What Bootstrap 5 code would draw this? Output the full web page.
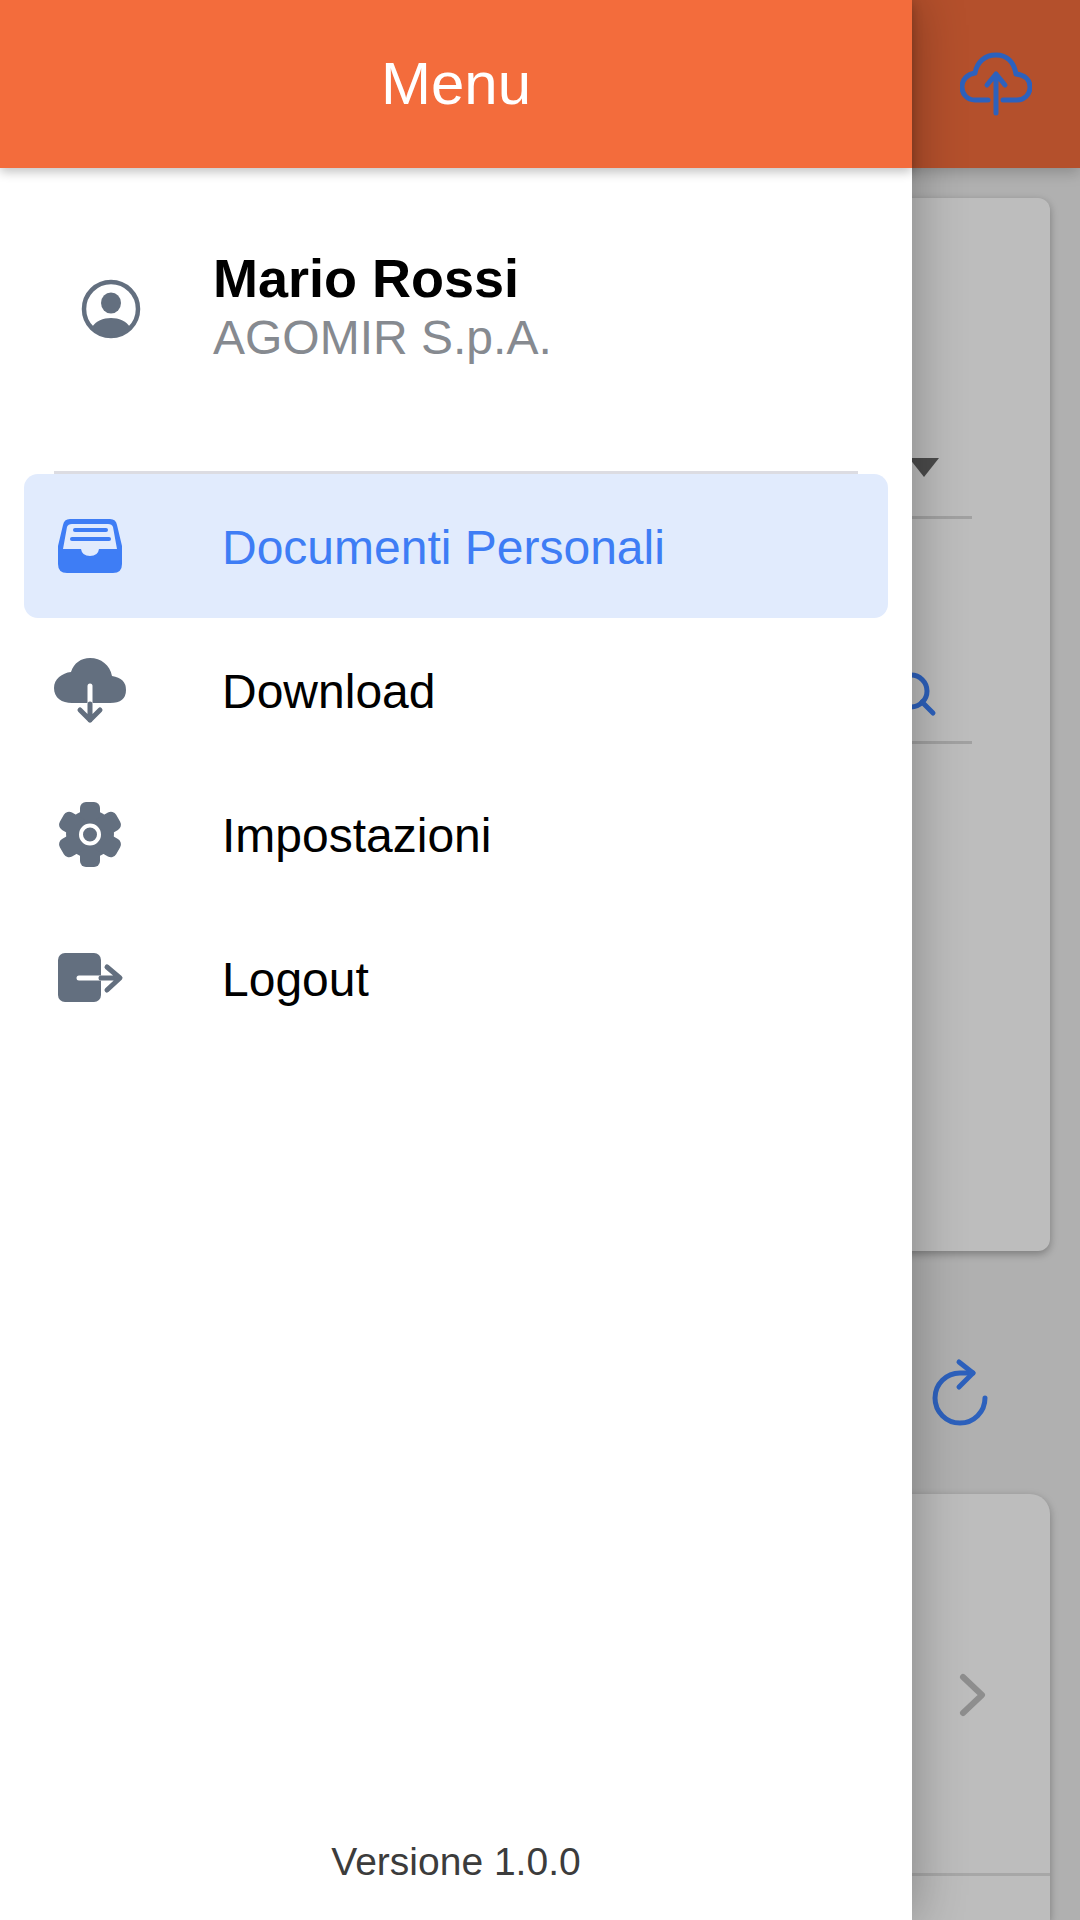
<!DOCTYPE html>
<html lang="it">
<head>
<meta charset="utf-8">
<title>Menu</title>
<link href="https://cdn.jsdelivr.net/npm/bootstrap@5.3.0/dist/css/bootstrap.min.css" rel="stylesheet">
<style>
html, body { margin: 0; width: 1080px; height: 1920px; overflow: hidden; font-family: "Liberation Sans", Arial, sans-serif; }
.stage { width: 1080px; height: 1920px; overflow: hidden; background: #eeeeee; }
.app-head { height: 168px; background: #f36c3c; padding-right: 48px; box-shadow: 0 4px 14px rgba(0,0,0,.22); z-index: 1; }
.app-head svg { width: 72px; height: 72px; }
.stroke-icon { fill: none; stroke: #3d84ff; stroke-width: 5; stroke-linecap: round; stroke-linejoin: round; }
.sheet { margin: 30px 30px 0; height: 1053px; background: #fff; border-radius: 12px; box-shadow: 0 3px 8px rgba(0,0,0,.3); padding: 0 78px 0 0; }
.field { border-bottom: 3px solid #d9d9d9; }
.field-select { height: 321px; padding-top: 260px; padding-right: 33px; }
.field-search { height: 225px; padding-top: 150px; }
.tri { width: 0; height: 0; border-left: 15px solid transparent; border-right: 15px solid transparent; border-top: 19px solid #666; }
.field-search svg { width: 60px; height: 60px; margin-right: 23px; }
.reload-row { height: 243px; padding: 43px 84px 0 0; }
.reload-row svg { width: 72px; height: 72px; }
.sheet-two { margin: 0 30px; height: 426px; flex: 0 0 auto; background: #fff; border-radius: 20px 20px 0 0; box-shadow: 0 3px 8px rgba(0,0,0,.3); }
.sheet-row { height: 382px; padding: 23px 56px 0 0; border-bottom: 3px solid #e2e2e2; }
.sheet-row svg { width: 42px; height: 60px; }
.scrim { inset: 0; background: rgba(0,0,0,.26); z-index: 2; }
.drawer { left: 0; top: 0; width: 912px; height: 1920px; background: #fff; box-shadow: 0 0 50px rgba(0,0,0,.32); z-index: 3; }
.drawer-head { height: 168px; flex: 0 0 168px; background: #f36c3c; color: #fff; font-size: 60px; box-shadow: 0 4px 10px rgba(0,0,0,.24); z-index: 1; }
.who { padding: 81px 0 0 81px; height: 303px; flex: 0 0 303px; align-items: flex-start; }
.who-pic { width: 60px; height: 60px; margin: 30px 72px 0 0; flex: 0 0 60px; }
.who-name { font-size: 54px; font-weight: 700; line-height: 59px; color: #000; }
.who-org { font-size: 48px; line-height: 60px; color: #868a90; }
.rule { height: 3px; background: #dcdce2; margin: 0 54px 0; opacity: 1; border: 0; flex: 0 0 3px; }
.drawer-nav .nav-link { height: 144px; margin: 0 24px; padding: 0 0 0 30px; border-radius: 14px; color: #000; font-size: 48px; display: flex; align-items: center; }
.drawer-nav .nav-link.active { background: #e1ebfd; color: #3e7df5; }
.drawer-nav svg { width: 72px; height: 72px; flex: 0 0 72px; margin-right: 96px; }
.slate { fill: #636f7f; }
.slate-line { fill: none; stroke: #636f7f; stroke-width: 5; stroke-linecap: round; stroke-linejoin: round; }
.white-line { fill: none; stroke: #fff; stroke-width: 5; stroke-linecap: round; }
.version { font-size: 39px; color: #3c3c3c; line-height: 48px; padding-bottom: 34px; }
</style>
</head>
<body>
<div class="stage position-relative">
  <div class="d-flex flex-column h-100">
    <header class="app-head d-flex justify-content-end align-items-center position-relative flex-shrink-0">
      <svg viewBox="0 0 72 72" class="stroke-icon"><path d="M28 52H15C7 52 2 46 2 39C2 31 8 26 15 25C17 14 25 7 36 7C47 7 54 14 56 26C65 27 70 32 70 39C70 47 64 52 57 52H43"/><path d="M36 65V26M27 37L36 26L45 37"/></svg>
    </header>
    <section class="sheet flex-shrink-0">
      <div class="field field-select d-flex justify-content-end"><div class="tri"></div></div>
      <div class="field field-search d-flex justify-content-end align-items-start">
        <svg viewBox="0 0 60 60" class="stroke-icon"><circle cx="22" cy="22" r="16"/><path d="M33 33L44 44"/></svg>
      </div>
    </section>
    <div class="reload-row d-flex justify-content-end align-items-center flex-shrink-0">
      <svg viewBox="0 0 72 72" class="stroke-icon"><path d="M61 40A25 25 0 1 1 36 15H49"/><path d="M35 4L49 15L35 29"/></svg>
    </div>
    <section class="sheet-two">
      <div class="sheet-row d-flex justify-content-end align-items-center">
        <svg viewBox="0 0 42 60" fill="none" stroke="#c0c0c0" stroke-width="6" stroke-linecap="round" stroke-linejoin="round"><path d="M11 12L30 30L11 48"/></svg>
      </div>
    </section>
  </div>

  <div class="scrim position-absolute"></div>

  <aside class="drawer position-absolute d-flex flex-column">
    <div class="drawer-head d-flex align-items-center justify-content-center position-relative">Menu</div>
    <div class="who d-flex">
      <svg class="who-pic" viewBox="0 0 60 60">
        <circle cx="30" cy="30" r="27" fill="none" stroke="#636f7f" stroke-width="4.5"/>
        <ellipse class="slate" cx="30" cy="24" rx="10" ry="10.5"/>
        <path class="slate" d="M11 48C15 42 22 39 30 39C38 39 45 42 49 48C44 54 37 58 30 58C23 58 16 54 11 48Z"/>
      </svg>
      <div>
        <div class="who-name">Mario Rossi</div>
        <div class="who-org">AGOMIR S.p.A.</div>
      </div>
    </div>
    <hr class="rule my-0">
    <nav class="nav nav-pills flex-column drawer-nav">
      <a class="nav-link active" href="#">
        <svg viewBox="0 0 72 72">
          <path fill="#3e7df5" fill-rule="evenodd" d="M16 9H56Q62 9 63 15L68 36V54Q68 63 59 63H13Q4 63 4 54V36L9 15Q10 9 16 9ZM18 14Q14 14 13 17L9 39H27Q28 46 36 46Q44 46 45 39H63L59 17Q58 14 54 14Z"/>
          <rect x="19" y="18" width="35" height="4" rx="2" fill="#3e7df5"/>
          <rect x="16" y="27" width="41" height="4" rx="2" fill="#3e7df5"/>
        </svg>
        <span class="pt-1">Documenti Personali</span>
      </a>
      <a class="nav-link" href="#">
        <svg viewBox="0 0 72 72">
          <path class="slate" d="M18 49H56Q72 49 72 36Q72 24 58 22C56 11 47 4 36 4C27 4 20 9 17 18C8 19 0 25 0 34C0 44 8 49 18 49Z"/>
          <path class="white-line" d="M36 32V49"/>
          <path class="slate-line" d="M36 50V66M26 56L36 66L46 56"/>
        </svg>
        <span class="pt-1">Download</span>
      </a>
      <a class="nav-link" href="#">
        <svg viewBox="0 0 72 72">
          <circle class="slate" cx="36" cy="36" r="24"/>
          <rect class="slate" x="26" y="4" width="20" height="65" rx="6"/>
          <rect class="slate" x="26" y="4" width="20" height="65" rx="6" transform="rotate(60 36 36.5)"/>
          <rect class="slate" x="26" y="4" width="20" height="65" rx="6" transform="rotate(-60 36 36.5)"/>
          <circle cx="36" cy="36.5" r="9" fill="none" stroke="#fff" stroke-width="4"/>
        </svg>
        <span class="pt-1">Impostazioni</span>
      </a>
      <a class="nav-link" href="#">
        <svg viewBox="0 0 72 72">
          <rect class="slate" x="4" y="11" width="43" height="49" rx="7"/>
          <path class="white-line" d="M25 36H47"/>
          <path class="slate-line" d="M47 36H65M53 25L66 36L53 48"/>
        </svg>
        <span class="pt-1">Logout</span>
      </a>
    </nav>
    <div class="version mt-auto text-center">Versione 1.0.0</div>
  </aside>
</div>
</body>
</html>
